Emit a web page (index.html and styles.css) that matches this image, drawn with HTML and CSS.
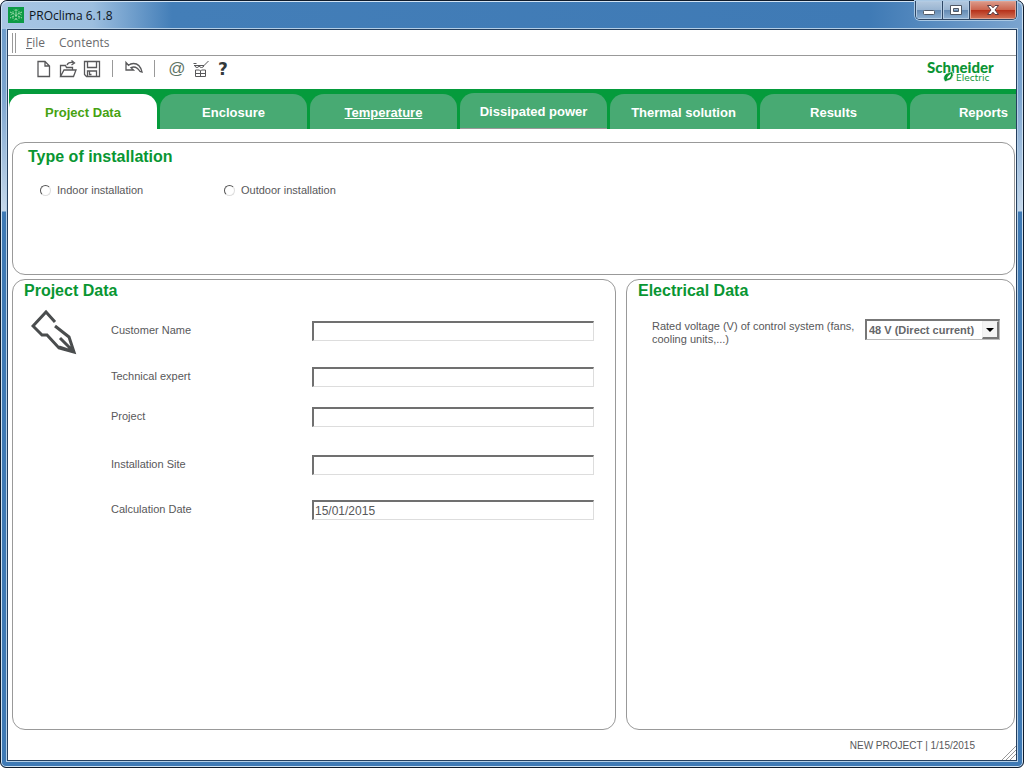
FILE: index.html
```html
<!DOCTYPE html>
<html lang="en">
<head>
<meta charset="utf-8">
<title>PROclima 6.1.8</title>
<link rel="stylesheet" href="styles.css">
</head>
<body>
<div class="window">
  <header class="titlebar">
    <svg class="app-icon" viewBox="0 0 16 16" aria-hidden="true">
      <rect width="16" height="16" fill="#0c9a45"/>
      <g stroke="#a5e0b0" fill="none">
        <path d="M8 2v12M2 5l12 6M14 5L2 11" stroke-dasharray="2 1"/>
        <path d="M6 2.500l2 2 2-2M6 13.500l2-2 2 2M2.500 8l2.500-1.500V4M13.500 8L11 6.500V4M5 12V9.500M11 12V9.500" stroke-width=".7"/>
      </g>
    </svg>
    <h1 class="title">PROclima 6.1.8</h1>
    <div class="controls">
      <button class="control" aria-label="Minimize">
        <svg width="14" height="12" viewBox="0 0 14 12"><rect x="1.500" y="6.500" width="11" height="4" rx="1" fill="#fff" stroke="#505865"/></svg>
      </button>
      <button class="control" aria-label="Maximize">
        <svg width="14" height="12" viewBox="0 0 14 12"><path fill-rule="evenodd" d="M1.500 1.500h11v9h-11zM4.500 4.500v3h5v-3z" fill="#fff" stroke="#505865"/></svg>
      </button>
      <button class="control control-close" aria-label="Close">
        <svg width="14" height="12" viewBox="0 0 14 12"><path d="M1.500 1.500h3.500l2 2.300 2-2.300h3.500L9 6l3.500 4.500H9L7 8.200l-2 2.300H1.500L5 6z" fill="#fff" stroke="#583a42"/></svg>
      </button>
    </div>
  </header>

  <div class="client">
    <nav class="menubar" aria-label="Menu">
      <span class="grip"></span>
      <button class="menu"><u>F</u>ile</button>
      <button class="menu">Contents</button>
    </nav>

    <div class="toolbar">
      <button class="tool" aria-label="New"><svg viewBox="0 0 18 18"><path d="M3 1.500h7l4.500 4.500v10.500H3zM10 1.500V6h4.500"/></svg></button>
      <button class="tool" aria-label="Open"><svg viewBox="0 0 18 18"><path d="M1.500 16.500V5.500h5l1 2h6V10M1.500 16.500l3.500-6.500h12l-2.500 6.500zM8 5q1-3 6-2.500M12.500 .500L15.500 3l-3 2"/></svg></button>
      <button class="tool" aria-label="Save"><svg viewBox="0 0 18 18"><path d="M1.500 1.500h15v15h-13l-2-2zM4.500 1.500v6h9v-6M4.500 16.500v-5.500h9v5.500M6.500 11v3.500h2"/></svg></button>
      <span class="divider"></span>
      <button class="tool" aria-label="Undo"><svg viewBox="0 0 18 18"><path d="M1 2.500v7.500h7.500L6 7.700q5-2.500 9 3.800l2 .5Q15 3.500 8.500 3.500 5.500 3.500 3.500 5.300z"/></svg></button>
      <span class="divider"></span>
      <button class="tool tool-at" aria-label="E-mail">@</button>
      <button class="tool" aria-label="Glossary"><svg class="glossary" viewBox="0 0 18 18"><path d="M1.500 3.500h3M3 5.500q0 2 2 2t2-2q.5 2 2.500 2t2.500-2L16.500 1M2 5.500h10M3.500 10h4l1 1 1-1h4v6.500h-10zM8.500 11v5M3.500 13.500h10"/></svg></button>
      <button class="tool tool-help" aria-label="Help">?</button>
      <svg class="logo" viewBox="0 0 72 26" role="img" aria-label="Schneider Electric">
        <text class="logo-name" x="0" y="14">Schneider</text>
        <text class="logo-sub" x="29" y="22">Electric</text>
        <path d="M17.500 22q-2.500-4.500 2-7.500l6-2q2 4-1.500 8l-5.500 2z" fill="#0b9434" stroke="#fff" stroke-width=".6"/><path d="M20 19.800q0-2.500 4-5.300.3 2.800-1.500 4.600z" fill="#fff"/>
      </svg>
    </div>

    <nav class="tabs" aria-label="Steps">
      <button class="tab tab-active">Project Data</button>
      <button class="tab">Enclosure</button>
      <button class="tab"><u>Temperature</u></button>
      <button class="tab tab-raised">Dissipated power</button>
      <button class="tab">Thermal solution</button>
      <button class="tab">Results</button>
      <button class="tab">Reports</button>
    </nav>

    <main class="content">
      <section class="panel panel-type">
        <h2 class="heading">Type of installation</h2>
        <div class="options">
          <label class="option"><input class="radio" type="radio" name="installation">Indoor installation</label>
          <label class="option"><input class="radio" type="radio" name="installation">Outdoor installation</label>
        </div>
      </section>

      <section class="panel panel-project">
        <h2 class="heading">Project Data</h2>
        <div class="project">
          <svg class="pencil" viewBox="0 0 46 46" aria-hidden="true">
            <path d="M24 13L15 3 2 17l9 9h5l12 13 15 4-5-15-14-11M43 43L29 29M28 38l15 5"/>
          </svg>
          <form class="fields">
            <label class="label" for="customer">Customer Name</label><input class="field" id="customer" type="text">
            <label class="label" for="expert">Technical expert</label><input class="field" id="expert" type="text">
            <label class="label" for="project">Project</label><input class="field" id="project" type="text">
            <label class="label" for="site">Installation Site</label><input class="field" id="site" type="text">
            <label class="label" for="date">Calculation Date</label><input class="field" id="date" type="text" value="15/01/2015">
          </form>
        </div>
      </section>

      <section class="panel panel-electrical">
        <h2 class="heading">Electrical Data</h2>
        <div class="voltage">
          <label class="voltage-label" for="voltage">Rated voltage (V) of control system (fans, cooling units,...)</label>
          <div class="combo">
            <select class="select" id="voltage"><option>48 V (Direct current)</option></select>
            <span class="arrow"></span>
          </div>
        </div>
      </section>
    </main>

    <footer class="status">
      <span>NEW PROJECT | 1/15/2015</span>
      <svg class="resize" viewBox="0 0 14 14" aria-hidden="true"><path d="M0 14L14 0M4 14L14 4M8 14l6-6"/></svg>
    </footer>
  </div>
</div>
</body>
</html>
```
FILE: styles.css
```css
* { box-sizing: border-box; }

body {
  margin: 0;
  background: #fff;
  color: #58585a;
  font-family: "Liberation Sans", Arial, sans-serif;
  font-size: 11px;
}

button {
  margin: 0;
  padding: 0;
  border: 0;
  background: none;
  color: inherit;
  font: inherit;
}

.window {
  display: flex;
  flex-direction: column;
  height: 100vh;
  padding: 0 6px 6px;
  border: 1px solid #101c2c;
  border-radius: 7px 7px 6px 6px;
  background: linear-gradient(#6f9dcb 0, #6f9dcb 28px, #7ba4cf 90px, #c4d7ea 210px, #3f7ab5 211px);
  box-shadow: inset 0 0 0 1px #cfe2f3;
}

.titlebar {
  display: flex;
  align-items: center;
  flex: none;
  height: 28px;
  margin: 0 -5px;
  padding: 0 5px 0 6px;
  border-radius: 6px 6px 0 0;
  background: linear-gradient(90deg, #a8c6e4 0, #9dbfe0 90px, #437eb8 170px, #3f7ab5 85%, #7ba4cf 100%);
  box-shadow: inset 0 1px #d3e4f4;
}

.app-icon { width: 16px; height: 16px; }

.title {
  margin: 0 auto 0 5px;
  color: #0c1420;
  font: 12px "Open Sans", "Noto Sans", sans-serif;
}

.controls {
  display: flex;
  align-self: flex-start;
  height: 19px;
  border: 1px solid #2e4765;
  border-top: 0;
  border-radius: 0 0 5px 5px;
  overflow: hidden;
  box-shadow: 0 0 0 1px #a9c8e4;
}

.control {
  display: grid;
  place-items: center;
  width: 27px;
  border-right: 1px solid #2e4765;
  background: linear-gradient(#b4c9df 0, #9ab5d2 48%, #6389b2 50%, #8fb2d4 100%);
  box-shadow: inset 0 0 0 1px #b3cbe3;
}

.control-close {
  width: 46px;
  border-right: 0;
  background: linear-gradient(#dc9c8c 0, #cc6650 48%, #b52e18 50%, #d27559 100%);
  box-shadow: inset 0 0 0 1px #e0a394;
}

.client {
  display: flex;
  flex: 1;
  flex-direction: column;
  min-height: 0;
  border: 1px solid #253f5e;
  outline: 1px solid #b4cee6;
  background: #fff;
  overflow: hidden;
}

.menubar {
  display: flex;
  align-items: center;
  flex: none;
  gap: 14px;
  height: 26px;
  padding-left: 4px;
  border-bottom: 1px solid #999;
}

.grip {
  width: 4px;
  height: 20px;
  margin-right: -4px;
  border: solid #999;
  border-width: 0 1px;
}

.menu {
  color: #6a6a6c;
  font: 12px "Open Sans", "Noto Sans", sans-serif;
}

.toolbar {
  display: flex;
  align-items: center;
  flex: none;
  gap: 6px;
  height: 33px;
  padding: 0 17px 8px 27px;
}

.tool {
  width: 18px;
  height: 18px;
  line-height: 18px;
}

.tool svg {
  display: block;
  fill: none;
  stroke: #58585a;
  stroke-width: 1.3;
}

.tool .glossary { stroke-width: 1; }

.tool-at {
  margin-left: 1px;
  color: #5f7566;
  font: 17px/18px "Liberation Sans", Arial, sans-serif;
}

.tool-help {
  margin-left: -2px;
  color: #333a3c;
  font: bold 17px/18px "DejaVu Sans", sans-serif;
}

.divider {
  width: 1px;
  height: 17px;
  margin: 0 6px 0 5px;
  background: #999;
}

.logo {
  width: 72px;
  height: 26px;
  margin: 6px 0 0 auto;
  fill: #0b9434;
}

.logo-name { font: 900 15px Lato, sans-serif; }
.logo-sub { font: 9px "DejaVu Sans", sans-serif; }

.tabs {
  display: flex;
  flex: none;
  gap: 3px;
  height: 40px;
  margin-left: 1px;
  padding-top: 5px;
  background: #059b3c;
  overflow: hidden;
}

.tab {
  flex: none;
  width: 147px;
  padding-top: 2px;
  border-radius: 14px 14px 0 0;
  background: #48aa73;
  color: #fff;
  font: bold 13px "Liberation Sans", Arial, sans-serif;
}

.tab-active {
  width: 148px;
  background: #fff;
  color: #46a212;
}

.tab-raised {
  margin-top: -1px;
  border-bottom: 1px solid #999;
}

.content {
  display: grid;
  flex: 1;
  grid-template-columns: 604fr 389fr;
  grid-template-rows: 133px 1fr;
  gap: 4px 10px;
  min-height: 0;
  padding: 13px 1px 0 4px;
}

.panel {
  border: 1px solid #999;
  border-radius: 13px;
}

.panel-type {
  grid-column: 1 / 3;
  padding: 4px 15px;
}

.panel-project { padding: 1px 21px 0 11px; }
.panel-electrical { padding: 1px 14px 0 11px; }

.heading {
  margin: 0;
  color: #089632;
  font: bold 16px/20px "Liberation Sans", Arial, sans-serif;
}

.options {
  display: flex;
  margin: 14px 0 0 12px;
}

.option {
  display: flex;
  align-items: center;
  gap: 6px;
  width: 184px;
  line-height: 18px;
}

.radio {
  appearance: none;
  width: 11px;
  height: 11px;
  margin: 0;
  border: 1px solid;
  border-color: #555 #ddd #ddd #555;
  border-radius: 50%;
  background: #fff;
}

.project {
  display: flex;
  align-items: flex-start;
  margin-top: 20px;
}

.pencil {
  flex: none;
  width: 46px;
  height: 46px;
  margin: -12px 34px 0 7px;
  fill: none;
  stroke: #4a4d4e;
  stroke-width: 3;
}

.fields {
  display: grid;
  flex: 1;
  grid-template-columns: 201px 1fr;
  grid-template-rows: 46px 40px 48px 45px 20px;
  align-items: start;
}

.label { line-height: 18px; }

.field {
  width: 100%;
  height: 20px;
  padding: 0 1px;
  border: solid;
  border-width: 2px 1px 1px 2px;
  border-color: #707070 #ddd #ddd #707070;
  background: #fff;
  color: #58585a;
  font: 12px "Liberation Sans", Arial, sans-serif;
}

.voltage {
  display: flex;
  justify-content: space-between;
  gap: 8px;
  margin: 18px 0 0 14px;
}

.voltage-label {
  width: 205px;
  padding-top: 1px;
  line-height: 13px;
}

.combo {
  display: flex;
  position: relative;
  width: 135px;
  height: 21px;
}

.select {
  appearance: none;
  width: 100%;
  padding: 0 0 0 2px;
  border: solid;
  border-width: 2px 1px 1px 2px;
  border-color: #777 #bbb #bbb #777;
  border-radius: 0;
  background: #fff;
  color: #66676a;
  font: bold 11px "Liberation Sans", Arial, sans-serif;
}

.arrow {
  display: grid;
  place-items: center;
  position: absolute;
  top: 2px;
  right: 1px;
  bottom: 1px;
  width: 17px;
  border: solid;
  border-width: 1px 2px 2px 1px;
  border-color: #eee #777 #777 #eee;
  background: #f4f4f4;
  pointer-events: none;
}

.arrow::before {
  border: 4px solid transparent;
  border-top-color: #000;
  border-bottom: 0;
  content: "";
}

.status {
  display: flex;
  align-items: center;
  justify-content: flex-end;
  flex: none;
  gap: 27px;
  height: 30px;
  font-size: 10px;
}

.resize {
  align-self: flex-end;
  width: 14px;
  height: 14px;
  stroke: #999;
}
```
